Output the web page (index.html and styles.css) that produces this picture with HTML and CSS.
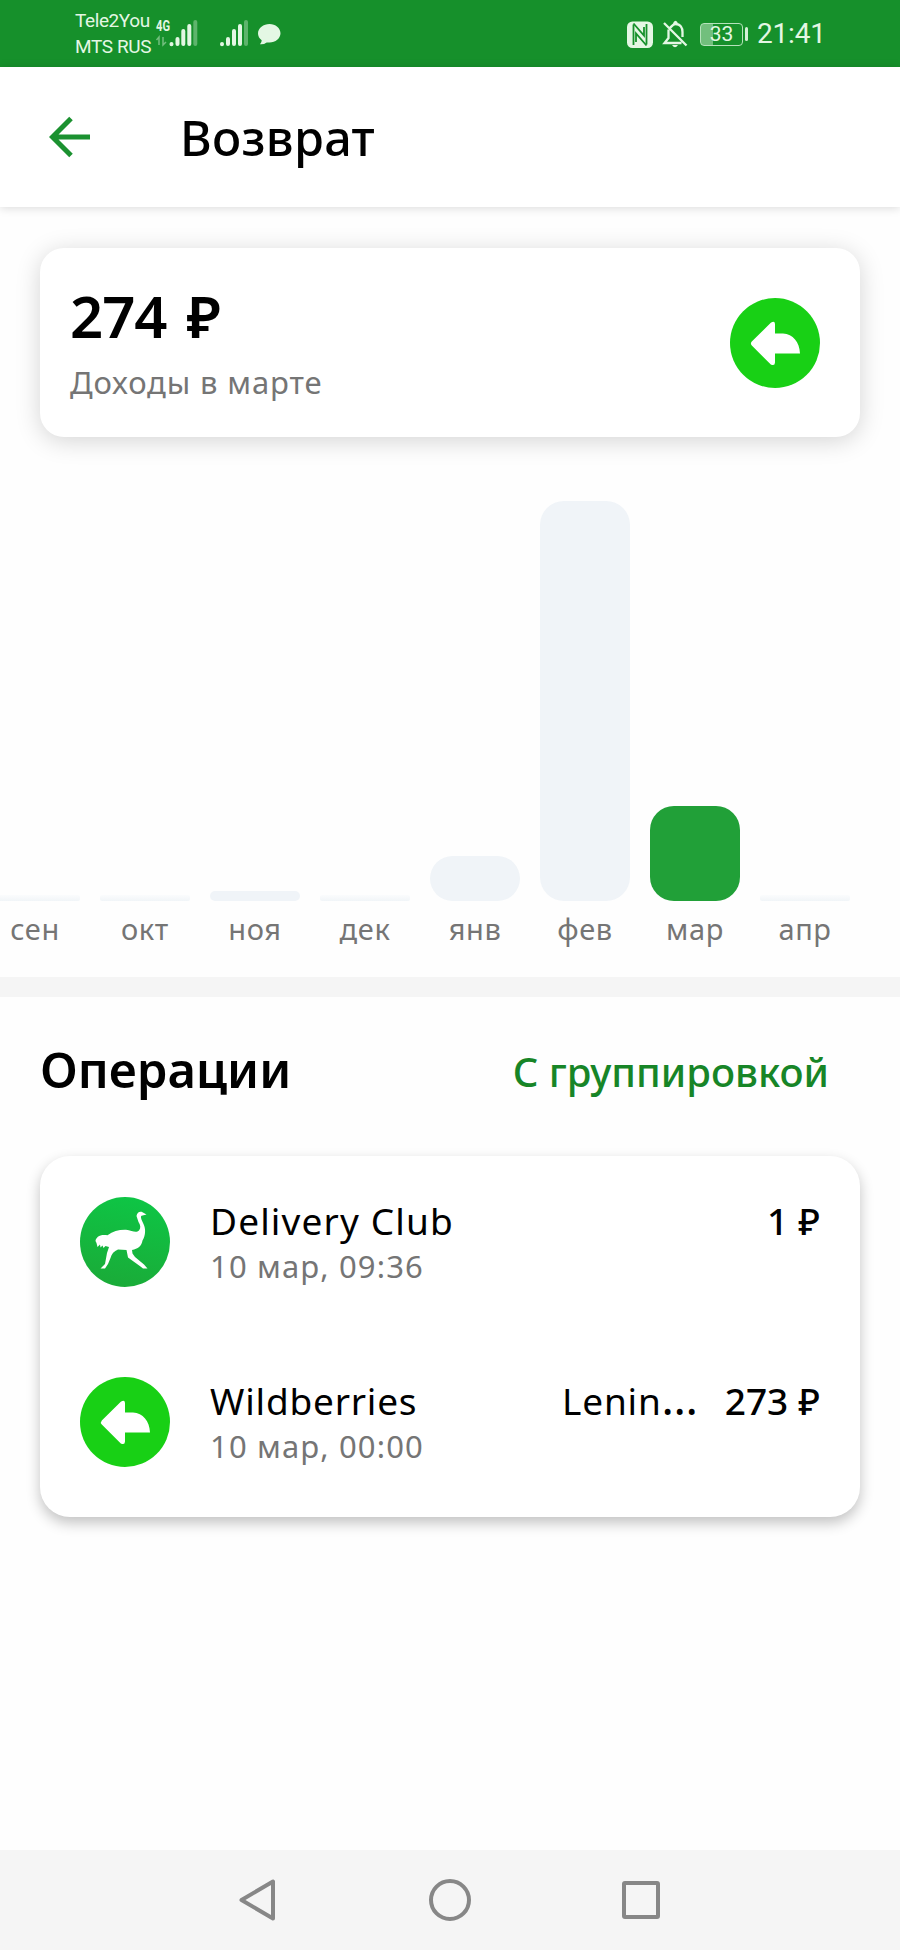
FILE: index.html
```html
<!DOCTYPE html>
<html lang="ru">
<head>
<meta charset="utf-8">
<title>Возврат</title>
<link rel="stylesheet" href="styles.css">
</head>
<body>
<svg class="defs" width="0" height="0">
  <defs>
    <linearGradient id="dc" x1="0.6" y1="0" x2="0.4" y2="1"><stop offset="0" stop-color="#0ec545"/><stop offset="1" stop-color="#1aab38"/></linearGradient>
    <symbol id="refund" viewBox="0 0 90 90">
      <circle cx="45" cy="45" r="45" fill="#18d015"/>
      <path d="M21.8 43.5 40.8 24.8Q44.8 22.2 45 26V35.5H53C63 36 69.5 44 70 55.5H45V64.5Q44.800 68.4 40.8 66.4L21.8 47.5Q20 45.5 21.8 43.5Z" fill="#fff"/>
    </symbol>
  </defs>
</svg>
<div class="phone">
  <div class="status">
    <div class="carriers"><span>Tele2You</span><span>MTS RUS</span></div>
    <svg class="signals" width="132" height="36" viewBox="0 0 132 36">
      <text x="1" y="16" class="lte" textLength="14" lengthAdjust="spacingAndGlyphs">4G</text>
      <g stroke="#e4f7e4" stroke-width="1.5" opacity=".45" fill="none"><path d="M4 30V22L1.5 25M8 22v8l3-3"/></g>
      <g stroke="#e4f7e4" stroke-width="4" stroke-linecap="round">
        <path d="M16.500 29v.3M22.500 24v5M28.300 16v13M34.300 11v18"/><path d="M40.300 7v22" opacity=".35"/>
        <path d="M67 29v.3M73 24v5M79 16v13M85 11v18"/><path d="M91 7v22" opacity=".35"/>
      </g>
      <path d="M114.500 9c6 0 11 4.200 11 9.300s-5 9.300-11 9.300q-1.500 0-2.800-.2-3 2.200-6.700 1.800 1.800-2 1.700-4-3.700-2.500-3.700-6.900C103 13.200 108.500 9 114.500 9Z" fill="#e4f7e4"/>
    </svg>
    <div class="indicators">
      <svg width="62" height="32" viewBox="0 0 62 32">
        <rect x="1" y="3.500" width="26" height="26.500" rx="5.500" fill="#e4f7e4"/>
        <path d="M7.500 27V6.500M20.500 6v20.500" fill="none" stroke="#16902b" stroke-width="1.800"/>
        <path d="M7.500 5.500 18 17.500V9M10 24V15.500L20.500 27.500" fill="none" stroke="#16902b" stroke-width="1.800"/>
        <path d="M44 10c2-2 3-4 5.500-4 5 0 7 4 7 8v5M42.500 11.500V20l-4 5h17M38 5l22.500 22.500M48 6q1.500-4 3 0" fill="none" stroke="#e4f7e4" stroke-width="2.300"/>
        <path d="M46 27h6q-3 4.500-6 0Z" fill="#e4f7e4"/>
      </svg>
      <div class="battery"><span class="cell">33</span><i></i></div>
      <span class="clock">21:41</span>
    </div>
  </div>
  <header class="bar">
    <svg width="42" height="42" viewBox="0 0 42 42"><path d="M41 21H4M22 2.500 3.500 21 22 39.500" fill="none" stroke="#1b9130" stroke-width="5"/></svg>
    <h1>Возврат</h1>
  </header>
  <section class="card summary">
    <div>
      <div class="total"><span>274</span><span>₽</span></div>
      <div class="caption">Доходы в марте</div>
    </div>
    <svg width="90" height="90"><use href="#refund"/></svg>
  </section>
  <section class="chart">
    <div class="col"><div class="bar-v empty"></div><span>сен</span></div>
    <div class="col"><div class="bar-v empty"></div><span>окт</span></div>
    <div class="col"><div class="bar-v tiny" style="height:10px"></div><span>ноя</span></div>
    <div class="col"><div class="bar-v empty"></div><span>дек</span></div>
    <div class="col"><div class="bar-v" style="height:45px"></div><span>янв</span></div>
    <div class="col"><div class="bar-v" style="height:400px"></div><span>фев</span></div>
    <div class="col"><div class="bar-v active" style="height:95px"></div><span>мар</span></div>
    <div class="col"><div class="bar-v empty"></div><span>апр</span></div>
  </section>
  <div class="divider"></div>
  <div class="ops-head"><h2>Операции</h2><a class="group">С группировкой</a></div>
  <section class="card ops">
    <div class="op">
      <svg width="90" height="90" viewBox="0 0 90 90">
        <circle cx="45" cy="45" r="45" fill="url(#dc)"/>
        <path d="M56.500 19C57 15.500 60 14 62.500 15.300L66.500 17.500 61.500 18.800C60 20 62 24 63.500 27 66 32 65.500 39 62.500 43.500 61.500 49 58 52 52 53L52.500 56.500 55 60 64 67.500 67.500 71.500 63 71.500 60.500 69.500 48 60.500 46.500 53 38 52.500C34 54 31.500 57 30.500 61L28 67 25 71.500 20.500 71.500 25 67 27 56 29 50 25.500 49 23.500 51 22.500 48.500 20.500 50.500 20 47.500 17.500 50 16.500 46 15.500 44C16 40 20 37 27.500 38.300 33 34 39 32.500 46 32.700 52 33.500 56 36.500 59 33.500 61 31 60.500 28 58.500 25Z" fill="#fff"/>
      </svg>
      <div class="info">
        <div class="line"><span class="name dc">Delivery Club</span><span class="sum"><b>1</b><b>₽</b></span></div>
        <div class="date">10 мар, 09:36</div>
      </div>
    </div>
    <div class="op">
      <svg width="90" height="90"><use href="#refund"/></svg>
      <div class="info">
        <div class="line"><span class="name wb">Wildberries</span><span class="place">Lenin<span class="more">…</span></span><span class="sum"><b>273</b><b>₽</b></span></div>
        <div class="date">10 мар, 00:00</div>
      </div>
    </div>
  </section>
  <nav class="nav">
    <svg width="500" height="60" viewBox="200 1870 500 60" fill="none" stroke="#878787" stroke-width="4" stroke-linejoin="round">
      <path d="M241.500 1900 273 1881.500V1918.500Z"/>
      <circle cx="450" cy="1900" r="19"/>
      <rect x="624" y="1883" width="34" height="34" rx="1"/>
    </svg>
  </nav>
</div>
</body>
</html>
```

FILE: styles.css
```css
* { box-sizing: border-box; margin: 0; padding: 0; }
body { background: #fefefe; font-family: "Noto Sans", "Open Sans", sans-serif; color: #000; }
.defs { display: block; position: absolute; }
.phone { width: 900px; height: 1950px; display: flex; flex-direction: column; overflow: hidden; background: #fefefe; }

.status { height: 67px; flex: none; background: #16902b; color: #e4f7e4; display: flex; font-family: Roboto, sans-serif; }
.carriers { display: flex; flex-direction: column; width: 80px; margin: 8px 0 0 75px; font-size: 19px; line-height: 26px; white-space: nowrap; letter-spacing: -.4px; }
.signals { margin: 15px 0 0 0; }
.lte { font: 700 15px Roboto, sans-serif; fill: #e4f7e4; }
.indicators { display: flex; align-items: center; height: 36px; margin: 16px 0 0 339px; }
.battery { display: flex; align-items: center; gap: 2px; margin-left: 12px; }
.cell { width: 43px; height: 23px; border: 1.5px solid #b5e2bb; border-radius: 4px; font-size: 21px; line-height: 21px; text-align: center; background: linear-gradient(90deg, #72bf7d 12px, transparent 12px); }
.battery i { width: 3px; height: 14px; background: #d5f0d7; border-radius: 2px; }
.clock { font-size: 28px; line-height: 36px; margin-left: 9px; letter-spacing: -.2px; }

.bar { height: 140px; flex: none; background: #fff; display: flex; align-items: center; padding-left: 49px; box-shadow: 0 1px 9px rgba(0,0,0,.15); }
h1 { font-size: 48.5px; font-weight: 500; line-height: 60px; margin-left: 89px; letter-spacing: .3px; }

.card { background: #fff; margin: 0 40px; flex: none; }
.summary { margin-top: 41px; height: 189px; border-radius: 24px; padding: 0 40px 0 30px; display: flex; align-items: center; justify-content: space-between; box-shadow: 0 4px 24px rgba(0,0,0,.17); }
.total { font-size: 58px; font-weight: 600; line-height: 68px; display: flex; gap: 20px; letter-spacing: -1px; }
.caption { color: #757575; font-size: 31px; line-height: 44px; margin-top: 10px; letter-spacing: .85px; }

.chart { display: grid; grid-template-columns: repeat(8, 90px); column-gap: 20px; margin: 64px 0 0 -10px; height: 476px; flex: none; }
.col { display: flex; flex-direction: column; align-items: center; }
.bar-v { width: 90px; margin-top: auto; border-radius: 24px; background: #f0f4f8; }
.bar-v.tiny { border-radius: 5px; }
.bar-v.empty { height: 6px; border-radius: 2px; background: linear-gradient(#fbfcfd, #f1f5f8); }
.bar-v.active { background: #21a038; }
.col span { height: 76px; line-height: 56px; font-size: 29px; color: #757575; letter-spacing: .6px; }

.divider { height: 20px; background: #f5f5f5; flex: none; }
.ops-head { height: 159px; padding: 0 71px 0 40px; display: flex; align-items: flex-start; justify-content: space-between; flex: none; }
h2 { font-size: 49px; font-weight: 600; line-height: 60px; margin-top: 42px; }
.group { color: #178527; font-size: 40px; font-weight: 500; line-height: 60px; margin-top: 45px; }

.ops { height: 361px; border-radius: 30px; padding: 41px 40px 0; box-shadow: 0 6px 14px rgba(0,0,0,.24); display: flex; flex-direction: column; gap: 90px; }
.op { display: flex; gap: 40px; height: 90px; }
.info { flex: 1; }
.line { display: flex; height: 48px; font-size: 37px; line-height: 48px; white-space: nowrap; }
.name { flex: 1; }
.dc { letter-spacing: 1.15px; }
.wb { letter-spacing: .8px; }
.sum { display: flex; gap: 10px; }
.sum b { font-weight: 500; }
.place { margin-right: 26px; letter-spacing: .8px; }
.more { font-size: 46px; line-height: 0; }
.date { color: #757575; font-size: 31px; line-height: 42px; letter-spacing: 1.15px; }

.nav { margin-top: auto; height: 100px; flex: none; background: #f5f5f5; display: flex; align-items: center; justify-content: center; }
```
